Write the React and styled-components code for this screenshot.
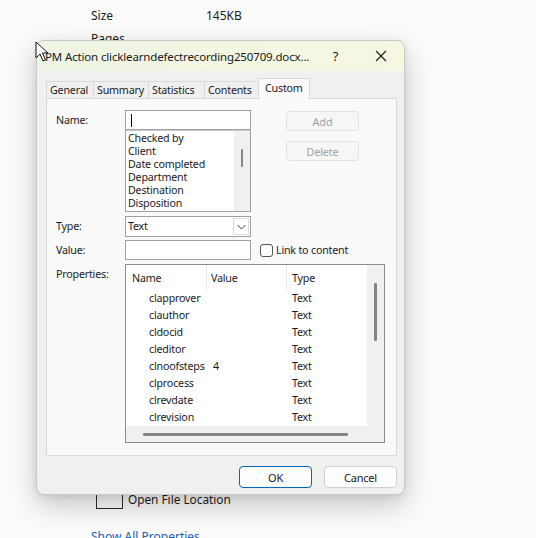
import React from 'react';
import styled, { createGlobalStyle } from 'styled-components';

const Global = createGlobalStyle`
  html, body { margin: 0; padding: 0; }
  body { background: #fbfbfb; font-family: "Noto Sans", "Open Sans", sans-serif; color: #1b1b1b; }
`;

const Desktop = styled.div`
  position: relative;
  width: 536px;
  height: 538px;
  overflow: hidden;
  background: #fbfbfb;
`;

const Details = styled.div`
  display: flex;
  flex-direction: column;
  padding: 4px 0 0 91px;
  font-size: 12px;
`;

const DetailRow = styled.div`
  display: flex;
  height: 23px;
  line-height: 23px;
`;

const DetailKey = styled.span`
  width: 115px;
`;

const OpenRow = styled.div`
  display: flex;
  align-items: flex-end;
  gap: 5px;
  margin: 431px 0 0 5px;
  font-size: 11.8px;
`;

const OpenBox = styled.div`
  width: 27px;
  height: 28px;
  border: 1px solid #2a2a2a;
  box-sizing: border-box;
`;

const OpenText = styled.span`
  line-height: 18px;
  padding-bottom: 1px;
`;

const ShowAll = styled.div`
  margin-top: 18px;
  font-size: 12px;
  color: #1a5fb4;
  line-height: 20px;
`;

const Dialog = styled.div`
  position: absolute;
  left: 36px;
  top: 40px;
  width: 369px;
  height: 455px;
  box-sizing: border-box;
  border: 1px solid #c9c9c9;
  border-radius: 8px;
  background: #f0f0f0;
  box-shadow: 0 10px 28px rgba(0, 0, 0, 0.22), 0 2px 6px rgba(0, 0, 0, 0.08);
  overflow: hidden;
  display: flex;
  flex-direction: column;
  font-size: 10.7px;
  letter-spacing: -0.2px;
`;

const TitleBar = styled.div`
  height: 30px;
  display: flex;
  align-items: center;
  padding-left: 8px;
  background: linear-gradient(90deg, #edf4e4 0%, #f2f6e2 50%, #f7f7e2 100%);
`;

const Title = styled.div`
  flex: 1;
  min-width: 0;
  overflow: hidden;
  font-size: 11.5px;
  letter-spacing: -0.15px;
  white-space: nowrap;
  color: #1a1a1a;
`;

const TitleButton = styled.div`
  width: ${p => p.$w || 45}px;
  height: 30px;
  flex-shrink: 0;
  display: flex;
  align-items: center;
  justify-content: center;
  font-size: 13px;
  color: #1a1a1a;
`;

const Body = styled.div`
  flex: 1;
  display: flex;
  flex-direction: column;
  padding: 7px 8px 0 9px;
`;

const Tabs = styled.div`
  display: flex;
  align-items: flex-end;
  height: 21px;
`;

const Tab = styled.div`
  width: ${p => p.$w}px;
  height: ${p => (p.$active ? 21 : 18)}px;
  box-sizing: border-box;
  border: 1px solid #d9d9d9;
  border-bottom: ${p => (p.$active ? 'none' : '1px solid #d9d9d9')};
  margin-left: -1px;
  background: ${p => (p.$active ? '#f9f9f9' : '#f0f0f0')};
  display: flex;
  align-items: ${p => (p.$active ? 'flex-start' : 'center')};
  padding: ${p => (p.$active ? '2px 0 0 6px' : '0 0 0 3px')};
  white-space: nowrap;
  position: relative;
  z-index: ${p => (p.$active ? 1 : 0)};
  &:first-child { margin-left: 0; }
`;

const Panel = styled.div`
  width: 351px;
  height: 358px;
  box-sizing: border-box;
  border: 1px solid #d9d9d9;
  margin-top: -1px;
  background: #f9f9f9;
  padding: 11px 0 0 9px;
  display: flex;
  flex-direction: column;
`;

const FieldRow = styled.div`
  display: flex;
  align-items: flex-start;
  margin-top: ${p => p.$mt || 0}px;
`;

const Label = styled.div`
  width: 69px;
  height: 20px;
  line-height: 20px;
  flex-shrink: 0;
`;

const Stack = styled.div`
  display: flex;
  flex-direction: column;
`;

const TextBox = styled.div`
  width: 126px;
  height: 20px;
  box-sizing: border-box;
  border: 1px solid #a0a0a0;
  background: #fff;
  display: flex;
  align-items: center;
  padding-left: 5px;
`;

const Caret = styled.div`
  width: 1px;
  height: 13px;
  background: #000;
`;

const ListBox = styled.div`
  width: 126px;
  height: 82px;
  box-sizing: border-box;
  border: 1px solid #a0a0a0;
  border-top: 1px solid #c8c8c8;
  background: #fff;
  display: flex;
`;

const ListItems = styled.div`
  flex: 1;
  padding: 1px 0 0 2px;
  overflow: hidden;
`;

const ListItem = styled.div`
  height: 13px;
  line-height: 13px;
  white-space: nowrap;
`;

const VScroll = styled.div`
  width: ${p => p.$w}px;
  background: #f0f0f0;
  position: relative;
  flex-shrink: 0;
`;

const Thumb = styled.div`
  position: absolute;
  left: ${p => p.$l}px;
  top: ${p => p.$t}px;
  width: ${p => p.$w}px;
  height: ${p => p.$h}px;
  background: #858585;
  border-radius: 1px;
`;

const SideButtons = styled.div`
  display: flex;
  flex-direction: column;
  gap: 10px;
  margin: 1px 0 0 35px;
`;

const Button = styled.div`
  width: ${p => p.$w || 72}px;
  height: ${p => p.$h || 20}px;
  box-sizing: border-box;
  border-radius: 4px;
  display: flex;
  align-items: center;
  justify-content: center;
  font-size: 11px;
  border: 1px solid ${p => (p.$primary ? '#0067c0' : p.$disabled ? '#e3e3e3' : '#d0d0d0')};
  background: ${p => (p.$disabled ? '#f6f6f6' : '#fdfdfd')};
  color: ${p => (p.$disabled ? '#a3a3a3' : '#1a1a1a')};
`;

const Combo = styled.div`
  width: 126px;
  height: 21px;
  box-sizing: border-box;
  border: 1px solid #a0a0a0;
  background: #fff;
  display: flex;
  align-items: center;
  padding: 0 1px 0 2px;
`;

const ComboText = styled.div`
  flex: 1;
  padding-bottom: 2px;
`;

const DropButton = styled.div`
  width: 16px;
  height: 17px;
  box-sizing: border-box;
  border: 1px solid #dcdcdc;
  display: flex;
  align-items: center;
  justify-content: center;
  background: #fff;
`;

const CheckWrap = styled.div`
  display: flex;
  align-items: center;
  gap: 3px;
  margin: 3px 0 0 9px;
`;

const CheckBox = styled.div`
  width: 13px;
  height: 13px;
  box-sizing: border-box;
  border: 1px solid #555;
  border-radius: 3px;
  background: #fff;
`;

const ListView = styled.div`
  width: 260px;
  height: 179px;
  box-sizing: border-box;
  border: 1px solid #8c8c8c;
  background: #fff;
  display: grid;
  grid-template-columns: 1fr 17px;
  grid-template-rows: 1fr 16px;
`;

const LVMain = styled.div`
  overflow: hidden;
`;

const LVHeader = styled.div`
  display: grid;
  grid-template-columns: 81px 80px 1fr;
  height: 25px;
`;

const HeadCell = styled.div`
  display: flex;
  align-items: center;
  padding-left: ${p => p.$pl}px;
  border-right: ${p => (p.$last ? 'none' : '1px solid #e5e5e5')};
`;

const LVRow = styled.div`
  display: grid;
  grid-template-columns: 81px 80px 1fr;
  height: 17px;
  line-height: 17px;
`;

const Cell = styled.div`
  padding-left: ${p => p.$pl}px;
  white-space: nowrap;
`;

const HScroll = styled.div`
  background: #f0f0f0;
  position: relative;
`;

const Corner = styled.div`
  background: #f0f0f0;
`;

const Footer = styled.div`
  display: flex;
  justify-content: flex-end;
  gap: 12px;
  margin: 10px -1px 0 0;
`;

const Cursor = styled.svg`
  position: absolute;
  left: 35px;
  top: 41px;
`;

const names = ['Checked by', 'Client', 'Date completed', 'Department', 'Destination', 'Disposition'];
const props = [
  ['clapprover', ''],
  ['clauthor', ''],
  ['cldocid', ''],
  ['cleditor', ''],
  ['clnoofsteps', '4'],
  ['clprocess', ''],
  ['clrevdate', ''],
  ['clrevision', ''],
  ['clstatus', ''],
];
const tabs = [
  ['General', 48],
  ['Summary', 56],
  ['Statistics', 57],
  ['Contents', 55],
  ['Custom', 52, true],
];

export default function App() {
  return (
    <Desktop>
      <Global />
      <Details>
        <DetailRow><DetailKey>Size</DetailKey><span>145KB</span></DetailRow>
        <DetailRow><DetailKey>Pages</DetailKey></DetailRow>
        <OpenRow><OpenBox /><OpenText>Open File Location</OpenText></OpenRow>
        <ShowAll>Show All Properties</ShowAll>
      </Details>

      <Dialog>
        <TitleBar>
          <Title>PM Action clicklearndefectrecording250709.docx...</Title>
          <TitleButton>?</TitleButton>
          <TitleButton $w={46}>
            <svg width="12" height="12" viewBox="0 0 12 12">
              <path d="M1 1 L11 11 M11 1 L1 11" stroke="#1a1a1a" strokeWidth="1.1" fill="none" />
            </svg>
          </TitleButton>
        </TitleBar>
        <Body>
          <Tabs>
            {tabs.map(([t, w, a]) => (
              <Tab key={t} $w={w} $active={a}>{t}</Tab>
            ))}
          </Tabs>
          <Panel>
            <FieldRow>
              <Label>Name:</Label>
              <Stack>
                <TextBox><Caret /></TextBox>
                <ListBox>
                  <ListItems>
                    {names.map(n => <ListItem key={n}>{n}</ListItem>)}
                  </ListItems>
                  <VScroll $w={16}><Thumb $l={7} $t={18} $w={2} $h={18} /></VScroll>
                </ListBox>
              </Stack>
              <SideButtons>
                <Button $disabled $w={73}>Add</Button>
                <Button $disabled $w={73}>Delete</Button>
              </SideButtons>
            </FieldRow>
            <FieldRow $mt={4}>
              <Label>Type:</Label>
              <Combo>
                <ComboText>Text</ComboText>
                <DropButton>
                  <svg width="9" height="6" viewBox="0 0 9 6">
                    <path d="M0.5 1 L4.5 5 L8.5 1" stroke="#444" strokeWidth="1" fill="none" />
                  </svg>
                </DropButton>
              </Combo>
            </FieldRow>
            <FieldRow $mt={3}>
              <Label>Value:</Label>
              <TextBox />
              <CheckWrap><CheckBox /><span>Link to content</span></CheckWrap>
            </FieldRow>
            <FieldRow $mt={4}>
              <Label>Properties:</Label>
              <ListView>
                <LVMain>
                  <LVHeader>
                    <HeadCell $pl={6}>Name</HeadCell>
                    <HeadCell $pl={4}>Value</HeadCell>
                    <HeadCell $pl={5} $last>Type</HeadCell>
                  </LVHeader>
                  {props.map(([n, v]) => (
                    <LVRow key={n}>
                      <Cell $pl={23}>{n}</Cell>
                      <Cell $pl={6}>{v}</Cell>
                      <Cell $pl={5}>Text</Cell>
                    </LVRow>
                  ))}
                </LVMain>
                <VScroll $w={17}><Thumb $l={7} $t={18} $w={3} $h={58} /></VScroll>
                <HScroll><Thumb $l={17} $t={7} $w={205} $h={3} /></HScroll>
                <Corner />
              </ListView>
            </FieldRow>
          </Panel>
          <Footer>
            <Button $primary $w={73} $h={22}>OK</Button>
            <Button $w={73} $h={22}>Cancel</Button>
          </Footer>
        </Body>
      </Dialog>

      <Cursor width="14" height="21" viewBox="0 0 14 21">
        <path d="M1 1 L1 17 L5 13 L8 20 L10.5 19 L7.5 12 L13 12 Z" fill="#fff" stroke="#111" strokeWidth="1" strokeLinejoin="round" />
      </Cursor>
    </Desktop>
  );
}
